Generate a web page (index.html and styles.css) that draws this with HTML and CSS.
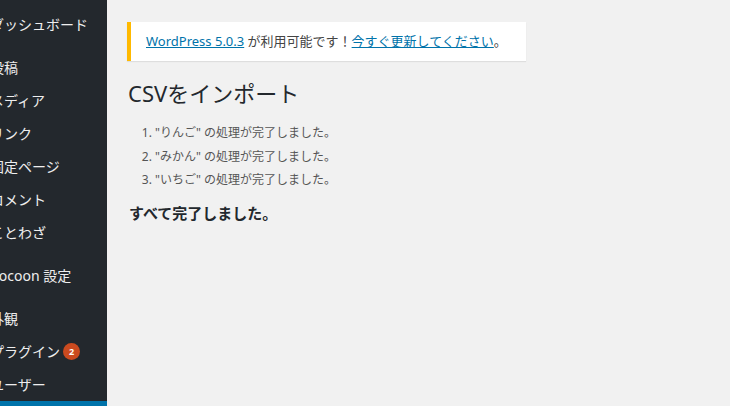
FILE: index.html
```html
<!DOCTYPE html>
<html lang="ja">
<head>
<meta charset="utf-8">
<link rel="stylesheet" href="styles.css">
</head>
<body>
<div class="admin">
  <nav class="sidebar">
    <ul class="menu">
      <li class="item">ダッシュボード</li>
      <li class="sep"></li>
      <li class="item">投稿</li>
      <li class="item">メディア</li>
      <li class="item">リンク</li>
      <li class="item">固定ページ</li>
      <li class="item">コメント</li>
      <li class="item">ことわざ</li>
      <li class="sep"></li>
      <li class="item">Cocoon 設定</li>
      <li class="sep"></li>
      <li class="item">外観</li>
      <li class="item">プラグイン <span class="badge">2</span></li>
      <li class="item">ユーザー</li>
      <li class="item current">ツール</li>
    </ul>
  </nav>
  <main class="content">
    <div class="nag"><a href="#">WordPress 5.0.3</a> が利用可能です！<a href="#">今すぐ更新してください</a>。</div>
    <div class="wrap">
      <h1 class="title">CSVをインポート</h1>
      <ol class="results">
        <li>"りんご" の処理が完了しました。</li>
        <li>"みかん" の処理が完了しました。</li>
        <li>"いちご" の処理が完了しました。</li>
      </ol>
      <h3 class="done">すべて完了しました。</h3>
    </div>
  </main>
</div>
</body>
</html>
```

FILE: styles.css
```css
html, body {
  margin: 0;
  padding: 0;
  height: 100%;
}
body {
  background: #f1f1f1;
  font-family: "Noto Sans", "Noto Sans CJK JP", sans-serif;
  color: #444;
  overflow: hidden;
}
.admin {
  display: flex;
  height: 406px;
}
.sidebar {
  width: 107px;
  flex: none;
  background: #23282d;
  overflow: hidden;
}
.menu {
  list-style: none;
  margin: 0;
  padding: 8px 0 0 0;
}
.item {
  height: 33px;
  line-height: 33px;
  font-size: 14px;
  color: #eee;
  white-space: nowrap;
  margin-left: -10px;
  display: flex;
  align-items: center;
}
.item.current {
  background: #0073aa;
  color: #fff;
  margin-left: 0;
}
.sep {
  height: 10px;
}
.badge {
  display: inline-block;
  width: 17px;
  height: 17px;
  border-radius: 50%;
  background: #ca4a1f;
  color: #fff;
  font-size: 9px;
  font-weight: 700;
  line-height: 17px;
  text-align: center;
  margin-left: 3px;
}
.content {
  flex: 1;
  padding-left: 20px;
}
.nag {
  display: inline-block;
  margin: 22px 0 0 0;
  padding: 10px 19px 10px 15px;
  background: #fff;
  border-left: 4px solid #ffb900;
  box-shadow: 0 1px 1px rgba(0,0,0,0.08);
  font-size: 13px;
  line-height: 19px;
  color: #444;
}
.nag a {
  color: #0073aa;
  text-decoration: underline;
}
.wrap {
  margin: 0 20px 0 2px;
}
.title {
  font-size: 22px;
  font-weight: 400;
  color: #23282d;
  margin: 18px 0 0 -1px;
  line-height: 29px;
}
.results {
  margin: 13px 0 0 26px;
  padding: 0;
  font-size: 12px;
  color: #555;
}
.results li {
  line-height: 23.5px;
}
.done {
  font-size: 15px;
  font-weight: 700;
  color: #23282d;
  margin: 10px 0 0 0;
  line-height: 22px;
}
```
